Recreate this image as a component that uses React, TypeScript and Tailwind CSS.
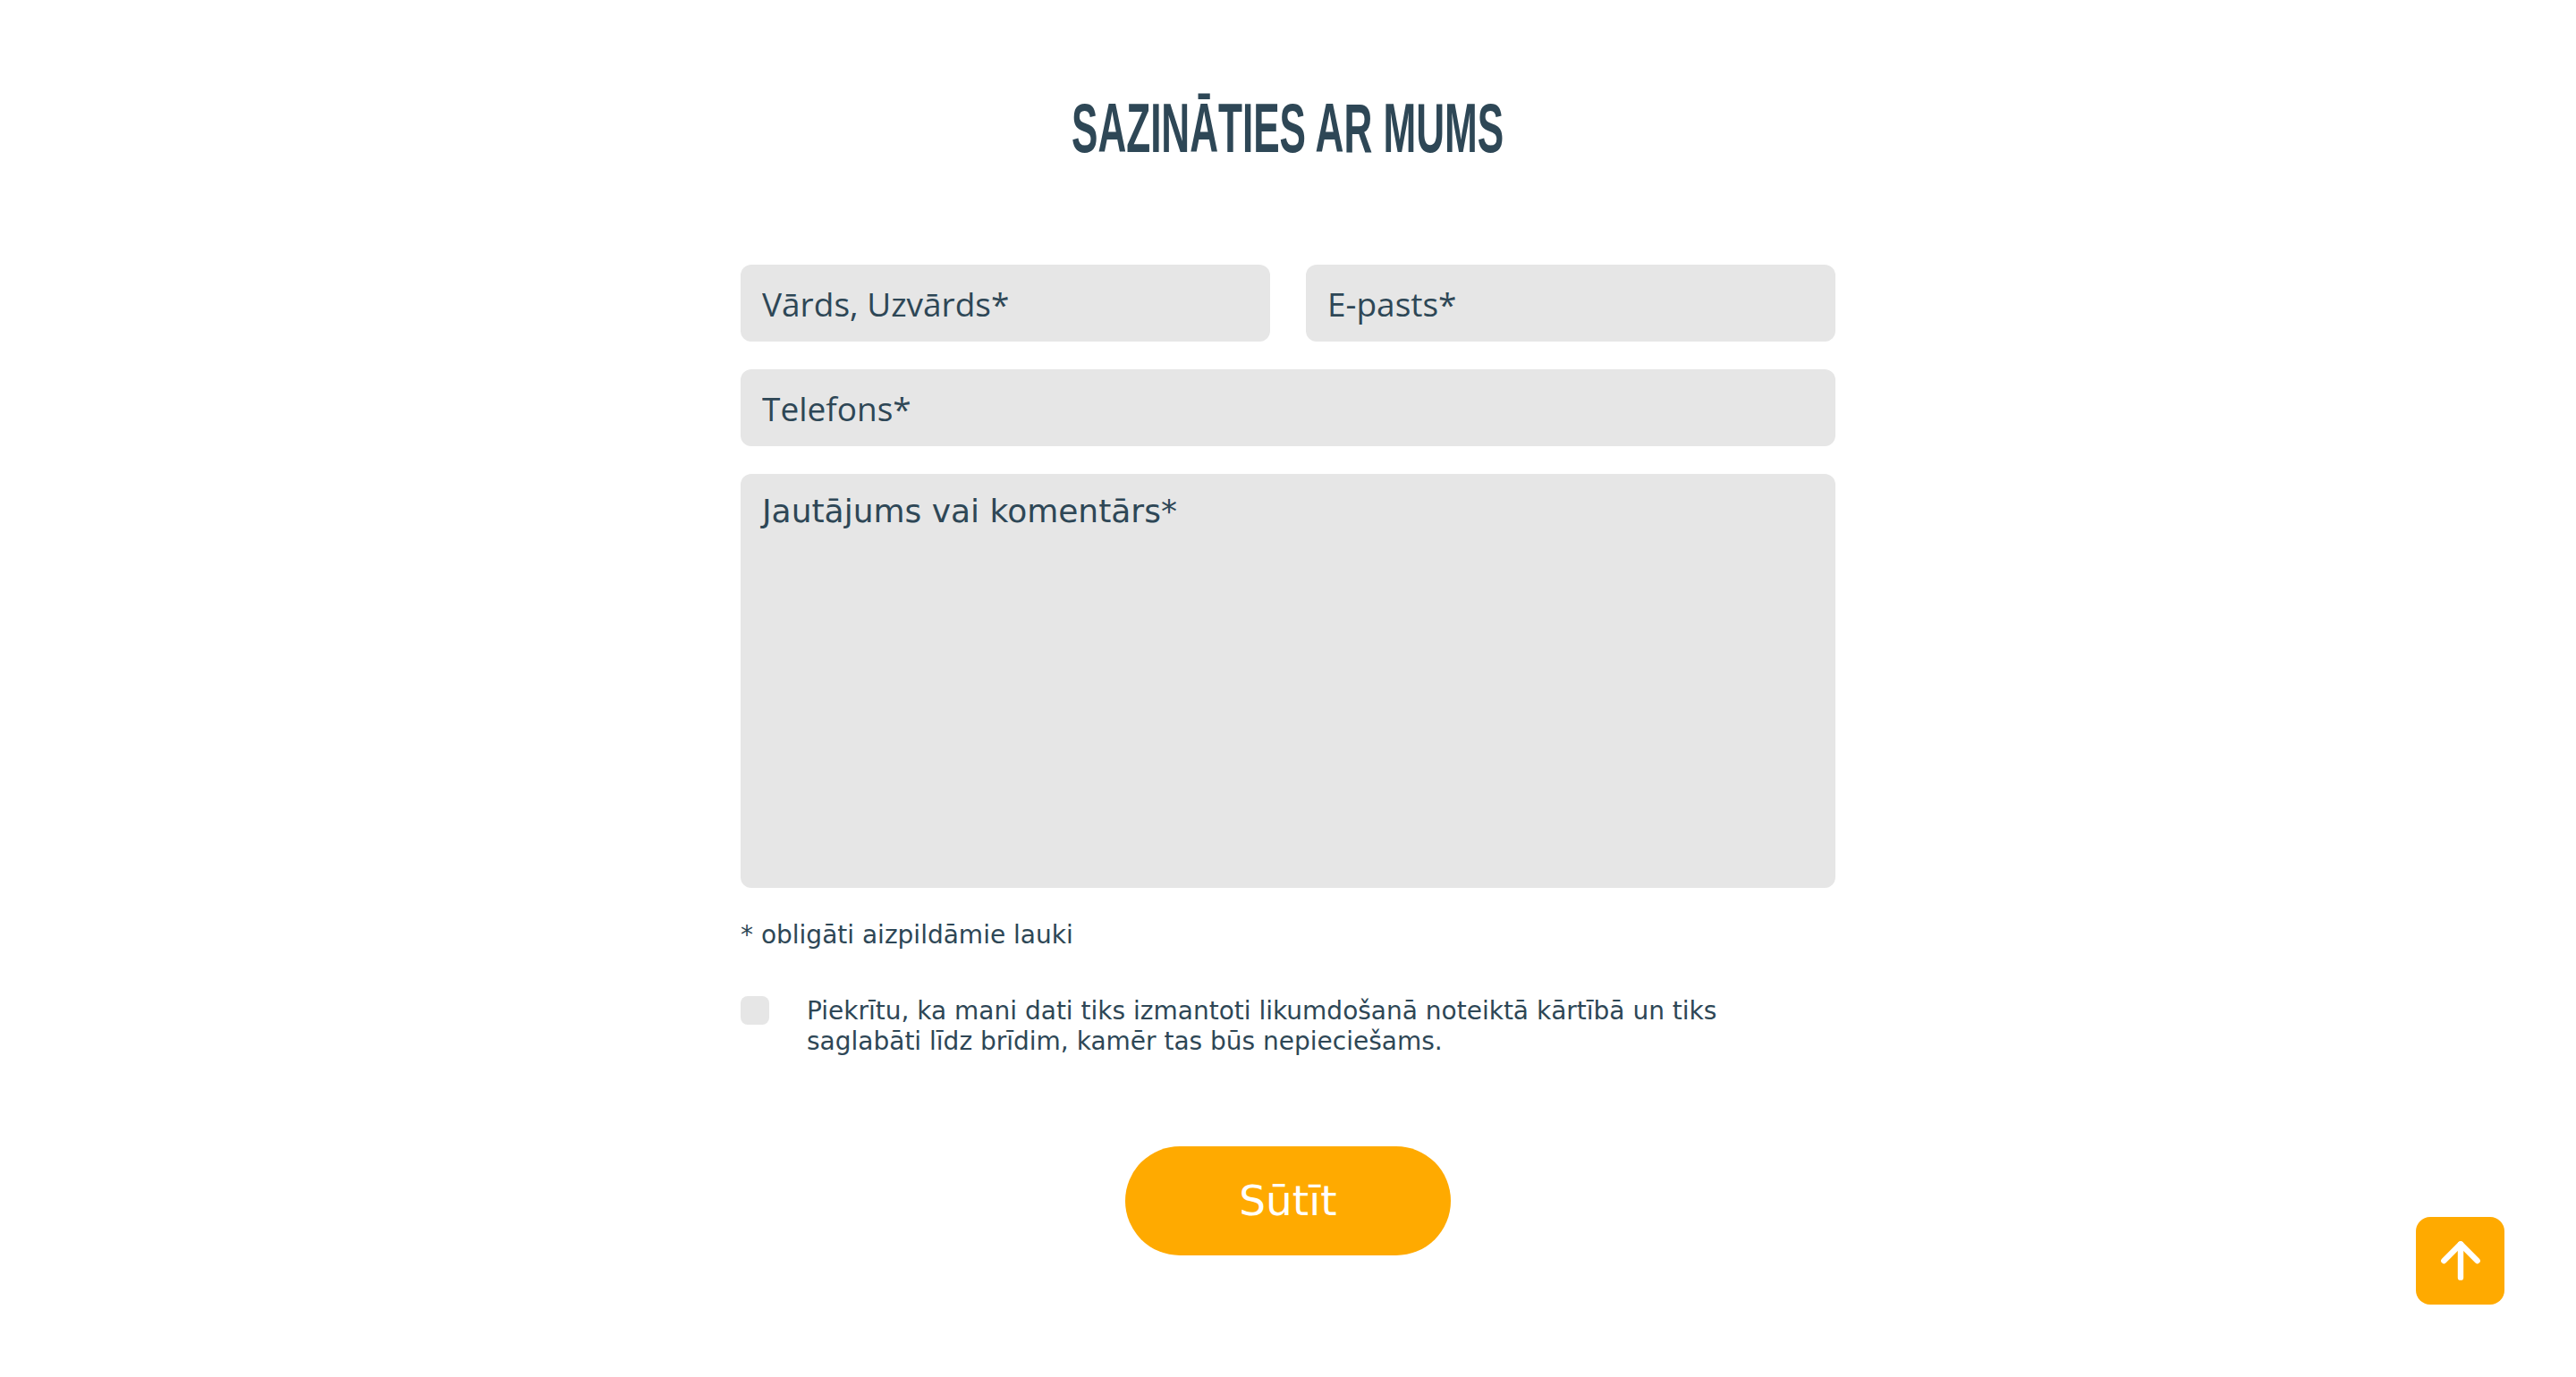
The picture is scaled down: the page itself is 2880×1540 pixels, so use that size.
import React from 'react';
import { ArrowUp } from 'lucide-react';

const inputClass =
  "w-full h-[86px] rounded-[12px] bg-[#e6e6e6] px-6 text-[37px] text-[#2e4756] placeholder:text-[#2e4756] outline-none font-['Open_Sans',sans-serif]";

const ContactForm = () => {
  return (
    <section className="w-[1224px] mx-auto pt-[104px]">
      <div className="flex justify-center">
        <h2 className="inline-block scale-x-[0.565] text-[78px] leading-none font-bold uppercase text-[#2e4756] font-['Liberation_Sans_Narrow','Liberation_Sans',sans-serif] whitespace-nowrap">
          Sazināties ar mums
        </h2>
      </div>

      <form className="mt-[114px]" onSubmit={(e) => e.preventDefault()}>
        <div className="grid grid-cols-2 gap-x-[40px] gap-y-[31px]">
          <input className={inputClass} placeholder="Vārds, Uzvārds*" />
          <input className={inputClass} placeholder="E-pasts*" />
          <input className={`${inputClass} col-span-2`} placeholder="Telefons*" />
          <textarea
            className="col-span-2 h-[463px] resize-none rounded-[12px] bg-[#e6e6e6] px-6 pt-[18px] text-[36px] leading-[48px] text-[#2e4756] placeholder:text-[#2e4756] outline-none font-['DejaVu_Sans',sans-serif]"
            placeholder="Jautājums vai komentārs*"
          />
        </div>

        <p className="mt-[35px] text-[28px] leading-[36px] text-[#2e4756] font-['DejaVu_Sans',sans-serif]">
          * obligāti aizpildāmie lauki
        </p>

        <label className="mt-[50px] flex items-start gap-[42px]">
          <span className="w-[32px] h-[32px] shrink-0 rounded-[8px] bg-[#e6e6e6]" />
          <span className="max-w-[1060px] text-[28px] leading-[34px] text-[#2e4756] font-['DejaVu_Sans',sans-serif]">
            Piekrītu, ka mani dati tiks izmantoti likumdošanā noteiktā kārtībā un tiks saglabāti līdz brīdim, kamēr tas būs nepieciešams.
          </span>
        </label>

        <div className="mt-[100px] flex justify-center">
          <button
            type="submit"
            className="w-[364px] h-[122px] rounded-full bg-[#ffaa00] text-white text-[47px] font-['DejaVu_Sans',sans-serif]"
          >
            Sūtīt
          </button>
        </div>
      </form>
    </section>
  );
};

export default function App() {
  return (
    <div className="min-h-screen bg-white">
      <ContactForm />
      <button
        aria-label="Uz augšu"
        className="fixed right-[80px] bottom-[81px] w-[99px] h-[98px] rounded-[16px] bg-[#ffaa00] flex items-center justify-center"
      >
        <ArrowUp size={64} strokeWidth={2.4} color="white" />
      </button>
    </div>
  );
}
